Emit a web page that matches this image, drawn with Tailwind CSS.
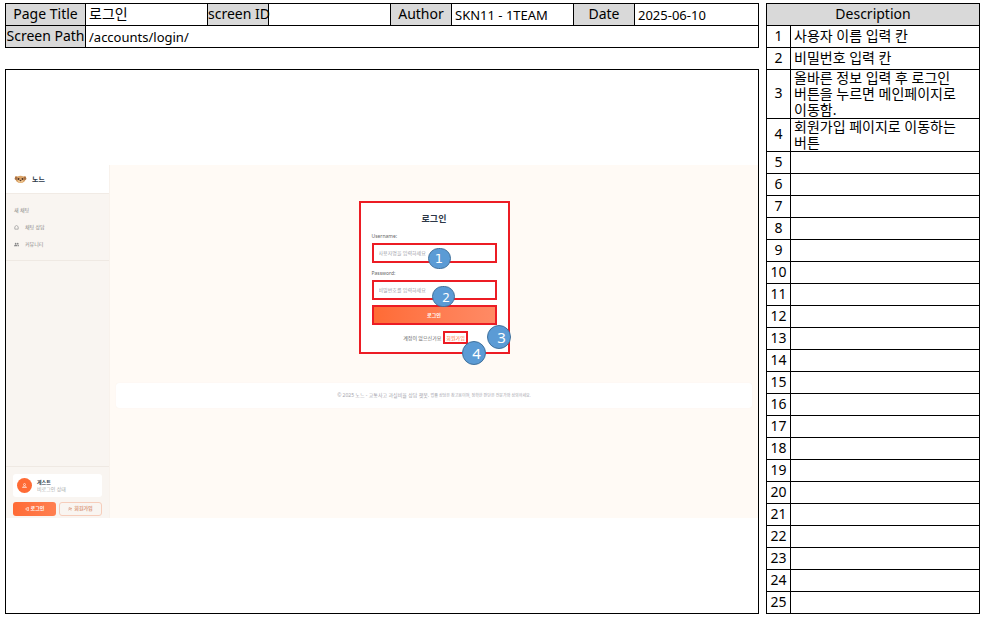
<!DOCTYPE html>
<html lang="ko">
<head>
<meta charset="utf-8">
<meta name="viewport" content="width=device-width, initial-scale=1">
<title>로그인 화면 설계서</title>
<script src="https://cdn.jsdelivr.net/npm/@tailwindcss/browser@4"></script>
</head>
<body class="bg-white text-black font-['Noto_Sans','Noto_Sans_CJK_KR',sans-serif]">
<div class="flex items-stretch gap-[7px] pt-[3px] pl-[5px] pr-[3px]">
  <div class="flex min-w-0 flex-1 flex-col gap-[21px]">
    <table class="w-full table-fixed border-separate border-spacing-0 border-t border-l border-black text-[13px] leading-4 whitespace-nowrap">
      <colgroup>
        <col class="w-[80px]"><col class="w-[122px]"><col class="w-[61px]"><col class="w-[122px]"><col class="w-[61px]"><col class="w-[122px]"><col class="w-[61px]"><col>
      </colgroup>
      <tbody>
        <tr class="h-[22px]">
          <th scope="row" class="border-r border-b border-black bg-[#d9d9d9] px-0 pt-0 pb-[2px] text-center text-[14px] font-normal">Page Title</th>
          <td class="border-r border-b border-black pt-0 pb-[2px] pl-[3px] pr-0 text-[14px]">로그인</td>
          <th scope="row" class="border-r border-b border-black bg-[#d9d9d9] px-0 pt-0 pb-[2px] text-center text-[14px] font-normal">screen ID</th>
          <td class="border-r border-b border-black p-0"></td>
          <th scope="row" class="border-r border-b border-black bg-[#d9d9d9] px-0 pt-0 pb-[2px] text-center text-[14px] font-normal">Author</th>
          <td class="border-r border-b border-black py-0 pl-[3px] pr-0">SKN11 - 1TEAM</td>
          <th scope="row" class="border-r border-b border-black bg-[#d9d9d9] px-0 pt-0 pb-[2px] text-center text-[14px] font-normal">Date</th>
          <td class="border-r border-b border-black py-0 pl-[3px] pr-0">2025-06-10</td>
        </tr>
        <tr class="h-[22px]">
          <th scope="row" class="border-r border-b border-black bg-[#d9d9d9] px-0 pt-0 pb-[2px] text-center text-[14px] font-normal">Screen Path</th>
          <td colspan="7" class="border-r border-b border-black py-0 pl-[3px] pr-0">/accounts/login/</td>
        </tr>
      </tbody>
    </table>

    <section class="flex flex-1 flex-col justify-center border border-black">
      <div class="flex min-h-[353px] bg-[#fffaf5]">
        <aside class="flex w-[104px] flex-col border-r border-[#f8f2ec] bg-[#f9f5f1] text-[#888]">
          <div class="flex h-[29px] items-center gap-[5px] border-b border-[#f1ebe5] bg-white pl-2">
            <svg class="h-[9px] w-[13px]" viewBox="0 0 26 18" aria-hidden="true">
              <path d="M2 7C1 3 4 2 7 3Q13 0 19 3C23 2 25 4 24 8L21 13Q13 19 5 13Z" fill="#dba468"/>
              <path d="M1 8L3 3L7 4L5 11ZM25 8L23 3L19 4L21 11Z" fill="#a87044"/>
              <circle cx="9" cy="8" r="2" fill="#4a3026"/><circle cx="17" cy="8" r="2" fill="#4a3026"/>
              <ellipse cx="13" cy="12" rx="5" ry="3" fill="#efc994"/><ellipse cx="13" cy="11" rx="2" ry="1.3" fill="#5a3626"/>
            </svg>
            <span class="text-[7px] leading-none font-bold text-[#2d3748]">노느</span>
          </div>
          <nav class="flex flex-col gap-2 border-b border-[#efe9e3] px-2 pt-3 pb-[11px] text-[5px] leading-[9px]">
            <a href="#">새 채팅</a>
            <a href="#" class="flex items-center gap-[6px]">
              <svg class="size-[5px]" viewBox="0 0 12 12" fill="none" stroke="#888" stroke-width="1.5" aria-hidden="true"><path d="M2 4L6 1L10 4V10H2Z"/></svg>채팅 상담</a>
            <a href="#" class="flex items-center gap-[6px]">
              <svg class="size-[5px]" viewBox="0 0 12 12" fill="#888" aria-hidden="true"><circle cx="4" cy="4" r="2"/><circle cx="9" cy="4" r="2"/><path d="M0 10Q0 6 4 6T8 10ZM9 10Q9 8 8 7Q12 6 12 10Z"/></svg>커뮤니티</a>
          </nav>
          <div class="mt-auto flex flex-col gap-[5px] border-t border-[#efe9e3] px-[7px] pt-[7px] pb-[2px]">
            <div class="flex h-[23px] items-center gap-[5px] rounded-[3px] bg-white pl-1">
              <span class="flex size-[15px] items-center justify-center rounded-full bg-[#ff6b35]">
                <svg class="size-[5px]" viewBox="0 0 10 10" fill="none" stroke="#ffe3d8" stroke-width="1.5" aria-hidden="true"><circle cx="5" cy="3" r="2"/><path d="M1 9Q2 6 5 6T9 9Z"/></svg>
              </span>
              <p class="flex flex-col text-[5px] leading-[7px] text-[#aaa]"><b class="text-[#2d3748]">게스트</b>비로그인 상태</p>
            </div>
            <div class="grid grid-cols-2 gap-[3px] text-[5px] font-bold">
              <button type="button" class="flex h-[14px] items-center justify-center gap-[2px] rounded-[3px] bg-linear-to-r from-[#ff6b35] to-[#ff7f50] text-white">
                <svg class="size-[4px]" viewBox="0 0 10 10" fill="none" stroke="currentColor" stroke-width="1.5" aria-hidden="true"><path d="M4 1H9V9H4M0 5H6M4 3L6 5L4 7"/></svg>로그인</button>
              <button type="button" class="flex h-[14px] items-center justify-center gap-[2px] rounded-[3px] border border-[#f6cdbb] text-[#d99a80]">
                <svg class="size-[4px]" viewBox="0 0 10 10" fill="none" stroke="currentColor" stroke-width="1.5" aria-hidden="true"><circle cx="4" cy="3" r="2"/><path d="M0 9Q1 6 4 6T8 9M8 2V6M6 4H10"/></svg>회원가입</button>
            </div>
          </div>
        </aside>

        <main class="flex min-w-0 flex-1 flex-col px-[6px] pt-9">
          <form class="relative flex w-[151px] flex-col self-center border-2 border-[#ec1c24] bg-white px-[11px] pt-[10px] pb-2 text-[5px] leading-[6px]">
            <h1 class="text-center text-[9px] leading-3 font-bold text-[#2d3748]">로그인</h1>
            <label for="user" class="mt-2 text-[#666]">Username:</label>
            <input id="user" type="text" placeholder="사용자명을 입력하세요" class="mt-1 h-5 w-full border-2 border-[#ec1c24] bg-white px-[5px] placeholder:text-[#a0a0a8]">
            <label for="pass" class="mt-[7px] text-[#666]">Password:</label>
            <input id="pass" type="password" placeholder="비밀번호를 입력하세요" class="mt-1 h-5 w-full border-2 border-[#ec1c24] bg-white px-[5px] placeholder:text-[#a0a0a8]">
            <button type="submit" class="mt-[5px] h-5 w-full border-2 border-[#ec1c24] bg-linear-to-r from-[#ff6b35] to-[#ff8a65] font-bold text-white">로그인</button>
            <p class="mt-[6px] flex items-center justify-center gap-[2px] pl-[3px] whitespace-nowrap text-[#666]">계정이 없으신가요 <a href="#" class="flex h-[13px] items-center border-2 border-[#ec1c24] px-[1px] text-[#ff6b35]">회원가입</a></p>

            <span class="absolute top-[45px] left-[67px] flex h-[21px] w-[23px] items-center justify-center rounded-full border border-[#41719c] bg-[#5b9bd5] font-['DejaVu_Sans'] text-[13px] text-white">1</span>
            <span class="absolute top-[83px] left-[71px] flex h-[21px] w-[23px] items-center justify-center rounded-full border border-[#41719c] bg-[#5b9bd5] pl-[6px] text-[13px] text-white">2</span>
            <span class="absolute top-[122px] left-[126px] flex size-6 items-center justify-center rounded-full border border-[#41719c] bg-[#5b9bd5] pl-[6px] text-[15px] text-white">3</span>
            <span class="absolute top-[138px] left-[101px] flex size-6 items-center justify-center rounded-full border border-[#41719c] bg-[#5b9bd5] pl-[6px] text-[15px] text-white">4</span>
          </form>
          <footer class="mt-[29px] flex h-[25px] items-center justify-center rounded-[3px] bg-white text-[4px] whitespace-nowrap text-[#a5a5ad] shadow-[0_0_1px_#f3ebe3]">
            <span class="text-[5px]">© 2025 노느 - 교통사고 과실비율 상담 챗봇.&nbsp;</span><span>법률 상담은 참고용이며, 정확한 판단은 전문가와 상의하세요.</span>
          </footer>
        </main>
      </div>
    </section>
  </div>

  <table class="w-[214px] shrink-0 table-fixed border-separate border-spacing-0 border-t border-l border-black text-[14px] leading-4">
    <colgroup><col class="w-[24px]"><col></colgroup>
    <thead>
      <tr class="h-[22px]"><th colspan="2" class="border-r border-b border-black bg-[#d9d9d9] px-0 pt-0 pb-[2px] text-center font-normal">Description</th></tr>
    </thead>
    <tbody id="rows">
      <tr class="h-[22px]"><td class="border-r border-b border-black px-0 pt-0 pb-[2px] text-center">1</td><td class="border-r border-b border-black pt-0 pb-[2px] pl-[3px] pr-0">사용자 이름 입력 칸</td></tr>
      <tr class="h-[22px]"><td class="border-r border-b border-black px-0 pt-0 pb-[2px] text-center">2</td><td class="border-r border-b border-black pt-0 pb-[2px] pl-[3px] pr-0">비밀번호 입력 칸</td></tr>
      <tr class="h-[49px]"><td class="border-r border-b border-black px-0 pt-0 pb-[2px] text-center">3</td><td class="border-r border-b border-black py-0 pl-[3px] pr-0 break-keep">올바른 정보 입력 후 로그인 버튼을 누르면 메인페이지로 이동함.</td></tr>
      <tr class="h-[33px]"><td class="border-r border-b border-black px-0 pt-0 pb-[2px] text-center">4</td><td class="border-r border-b border-black py-0 pl-[3px] pr-0 break-keep">회원가입 페이지로 이동하는 버튼</td></tr>
    </tbody>
  </table>
</div>
<script>
  const rows = document.getElementById('rows');
  for (let n = 5; n <= 25; n++) {
    const tr = document.createElement('tr');
    tr.className = 'h-[22px]';
    tr.innerHTML = `<td class="border-r border-b border-black px-0 pt-0 pb-[2px] text-center">${n}</td><td class="border-r border-b border-black p-0"></td>`;
    rows.append(tr);
  }
</script>
</body>
</html>
